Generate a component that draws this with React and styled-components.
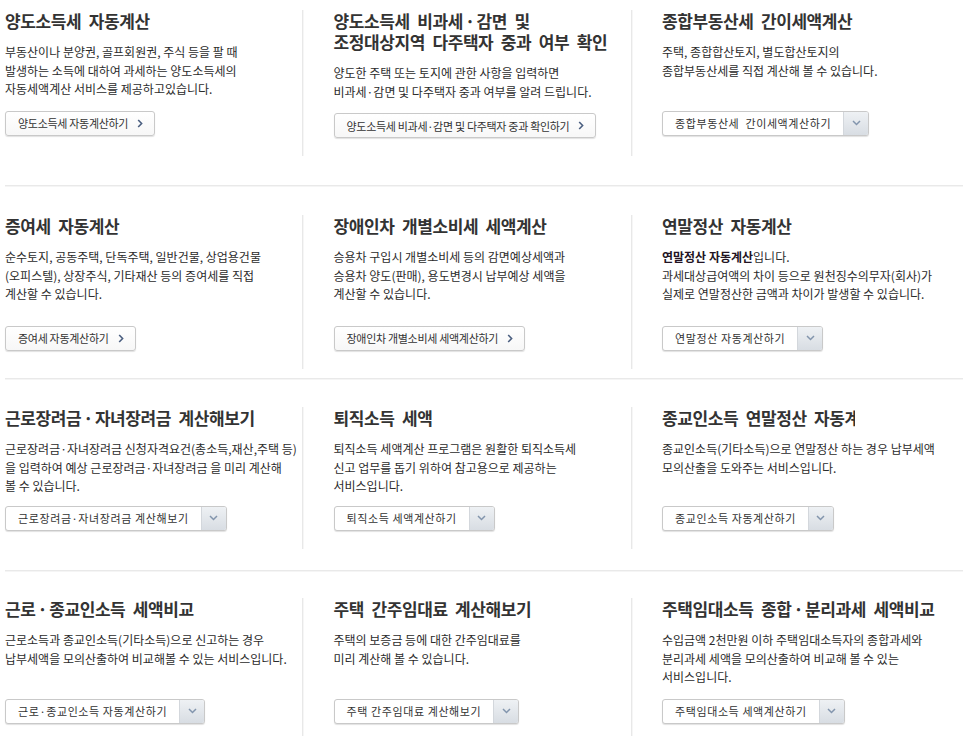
import React from 'react';
import styled, { createGlobalStyle } from 'styled-components';

const Global = createGlobalStyle`
  html, body { margin: 0; padding: 0; background: #fff; }
  body {
    font-family: "Noto Sans CJK KR", "Noto Sans", sans-serif;
    color: #333;
    overflow: hidden;
  }
`;

const Page = styled.div`
  padding-left: 5px;
`;

const Row = styled.section`
  display: grid;
  grid-template-columns: repeat(3, 298px);
  column-gap: 30.5px;
  align-items: stretch;
  padding-top: ${(p) => p.$pt}px;
  padding-bottom: ${(p) => p.$pb}px;
  border-bottom: ${(p) => (p.$last ? 'none' : '1px solid #e9e9e9')};
  box-shadow: ${(p) => (p.$last ? 'none' : '0 1px 0 #f5f5f5')};
`;

const Cell = styled.div`
  display: flex;
  flex-direction: column;
  align-items: flex-start;
  padding-bottom: 18px;
  border-right: 1px solid #e8e8e8;
  box-shadow: 1px 0 0 #f6f6f6;
  &:last-child {
    border-right: none;
    box-shadow: none;
  }
`;

const TextBlock = styled.div`
  min-height: 88.5px;
`;

const Title = styled.h3`
  margin: 0 0 12px;
  font-size: 17px;
  line-height: 21px;
  font-weight: 700;
  color: #333;
  letter-spacing: -0.4px;
  word-spacing: 4px;
  white-space: nowrap;
  ${(p) => (p.$clip ? `width: ${p.$clip}px; overflow: hidden;` : '')}
`;

const Dot = styled.span`
  margin: 0 2px;
  word-spacing: 0;
`;

const Desc = styled.p`
  margin: 0;
  font-size: 12px;
  line-height: 18.5px;
  color: #2b2b2b;
  letter-spacing: 0;
  white-space: nowrap;
  b {
    font-weight: 700;
    color: #231423;
  }
`;

const Actions = styled.div`
  display: flex;
  margin-top: ${(p) => p.$gap}px;
`;

const LinkButton = styled.a`
  display: inline-flex;
  align-items: center;
  gap: 9px;
  height: 25px;
  box-sizing: border-box;
  padding: 0 11px 0 12px;
  border: 1px solid #c9c9c9;
  border-radius: 3px;
  background: linear-gradient(#ffffff, #f7f7f7);
  box-shadow: 0 1px 1px rgba(0, 0, 0, 0.12);
  font-size: 11px;
  letter-spacing: -0.3px;
  color: #333;
  text-decoration: none;
  white-space: nowrap;
  svg { flex: none; }
`;

const SelectButton = styled.div`
  display: inline-flex;
  align-items: stretch;
  height: 25px;
  box-sizing: border-box;
  border: 1px solid #c9c9c9;
  border-radius: 3px;
  background: #fff;
  box-shadow: 0 1px 1px rgba(0, 0, 0, 0.12);
  overflow: hidden;
`;

const SelectLabel = styled.span`
  display: flex;
  align-items: center;
  padding: 0 12px 0 12px;
  font-size: 11px;
  letter-spacing: 0.6px;
  color: #333;
  white-space: pre;
`;

const Caret = styled.span`
  display: flex;
  align-items: center;
  justify-content: center;
  width: 24px;
  background: linear-gradient(#eef1f4, #d8dde3);
  border-left: 1px solid #d3d7dc;
`;

const ChevronRight = () => (
  <svg width="6" height="9" viewBox="0 0 6 9">
    <path d="M1.2 1 L4.6 4.5 L1.2 8" fill="none" stroke="#4b5f80" strokeWidth="1.6" />
  </svg>
);

const ChevronDown = () => (
  <svg width="9" height="6" viewBox="0 0 9 6">
    <path d="M1 1 L4.5 4.5 L8 1" fill="none" stroke="#8295ad" strokeWidth="1.5" />
  </svg>
);

const rows = [
  {
    pt: 10, pb: 29, gap: 12,
    items: [
      {
        title: ['양도소득세 자동계산'],
        desc: ['부동산이나 분양권, 골프회원권, 주식 등을 팔 때', '발생하는 소득에 대하여 과세하는 양도소득세의', '자동세액계산 서비스를 제공하고있습니다.'],
        type: 'link', label: '양도소득세 자동계산하기',
      },
      {
        title: ['양도소득세 비과세·감면 및', '조정대상지역 다주택자 중과 여부 확인'],
        desc: ['양도한 주택 또는 토지에 관한 사항을 입력하면', '비과세·감면 및 다주택자 중과 여부를 알려 드립니다.'],
        type: 'link', label: '양도소득세 비과세·감면 및 다주택자 중과 확인하기',
      },
      {
        title: ['종합부동산세 간이세액계산'],
        desc: ['주택, 종합합산토지, 별도합산토지의', '종합부동산세를 직접 계산해 볼 수 있습니다.'],
        type: 'select', label: '종합부동산세  간이세액계산하기',
      },
    ],
  },
  {
    pt: 29, pb: 9.5, gap: 22,
    items: [
      {
        title: ['증여세 자동계산'],
        desc: ['순수토지, 공동주택, 단독주택, 일반건물, 상업용건물', '(오피스텔), 상장주식, 기타재산 등의 증여세를 직접', '계산할 수 있습니다.'],
        type: 'link', label: '증여세 자동계산하기',
      },
      {
        title: ['장애인차 개별소비세 세액계산'],
        desc: ['승용차 구입시 개별소비세 등의 감면예상세액과', '승용차 양도(판매), 용도변경시 납부예상 세액을', '계산할 수 있습니다.'],
        type: 'link', label: '장애인차 개별소비세 세액계산하기',
      },
      {
        title: ['연말정산 자동계산'],
        desc: [
          <React.Fragment key="b"><b>연말정산 자동계산</b>입니다.</React.Fragment>,
          '과세대상급여액의 차이 등으로 원천징수의무자(회사)가',
          '실제로 연말정산한 금액과 차이가 발생할 수 있습니다.',
        ],
        type: 'select', label: '연말정산 자동계산하기',
      },
    ],
  },
  {
    pt: 28, pb: 21.5, gap: 10,
    items: [
      {
        title: ['근로장려금·자녀장려금 계산해보기'],
        desc: ['근로장려금·자녀장려금 신청자격요건(총소득,재산,주택 등)', '을 입력하여 예상 근로장려금·자녀장려금 을 미리 계산해', '볼 수 있습니다.'],
        type: 'select', label: '근로장려금·자녀장려금 계산해보기',
      },
      {
        title: ['퇴직소득 세액'],
        desc: ['퇴직소득 세액계산 프로그램은 원활한 퇴직소득세', '신고 업무를 돕기 위하여 참고용으로 제공하는', '서비스입니다.'],
        type: 'select', label: '퇴직소득 세액계산하기',
      },
      {
        title: ['종교인소득 연말정산 자동계산'], clip: 193,
        desc: ['종교인소득(기타소득)으로 연말정산 하는 경우 납부세액', '모의산출을 도와주는 서비스입니다.'],
        type: 'select', label: '종교인소득 자동계산하기',
      },
    ],
  },
  {
    pt: 27, pb: 0, gap: 12, last: true,
    items: [
      {
        title: ['근로·종교인소득 세액비교'],
        desc: ['근로소득과 종교인소득(기타소득)으로 신고하는 경우', '납부세액을 모의산출하여 비교해볼 수 있는 서비스입니다.'],
        type: 'select', label: '근로·종교인소득 자동계산하기',
      },
      {
        title: ['주택 간주임대료 계산해보기'],
        desc: ['주택의 보증금 등에 대한 간주임대료를', '미리 계산해 볼 수 있습니다.'],
        type: 'select', label: '주택 간주임대료 계산해보기',
      },
      {
        title: ['주택임대소득 종합·분리과세 세액비교'],
        desc: ['수입금액 2천만원 이하 주택임대소득자의 종합과세와', '분리과세 세액을 모의산출하여 비교해 볼 수 있는', '서비스입니다.'],
        type: 'select', label: '주택임대소득 세액계산하기',
      },
    ],
  },
];

const TitleText = ({ text }) => {
  const parts = text.split('·');
  return parts.map((p, i) => (
    <React.Fragment key={i}>
      {i > 0 && <Dot>·</Dot>}
      {p}
    </React.Fragment>
  ));
};

const Lines = ({ lines, dotted }) =>
  lines.map((l, i) => (
    <React.Fragment key={i}>
      {i > 0 && <br />}
      {dotted ? <TitleText text={l} /> : l}
    </React.Fragment>
  ));

export default function App() {
  return (
    <>
      <Global />
      <Page>
        {rows.map((row, ri) => (
          <Row key={ri} $pt={row.pt} $pb={row.pb} $last={row.last}>
            {row.items.map((it, ci) => (
              <Cell key={ci}>
                <TextBlock>
                  <Title $clip={it.clip}>
                    <Lines lines={it.title} dotted />
                  </Title>
                  <Desc>
                    <Lines lines={it.desc} />
                  </Desc>
                </TextBlock>
                <Actions $gap={row.gap}>
                  {it.type === 'link' ? (
                    <LinkButton href="#">
                      {it.label}
                      <ChevronRight />
                    </LinkButton>
                  ) : (
                    <SelectButton>
                      <SelectLabel>{it.label}</SelectLabel>
                      <Caret>
                        <ChevronDown />
                      </Caret>
                    </SelectButton>
                  )}
                </Actions>
              </Cell>
            ))}
          </Row>
        ))}
      </Page>
    </>
  );
}
